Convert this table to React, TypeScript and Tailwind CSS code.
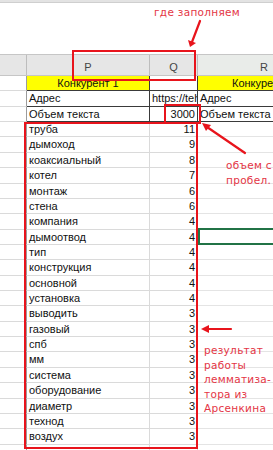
import React from 'react';

const words: [string, number][] = [
  ['труба', 11],
  ['дымоход', 9],
  ['коаксиальный', 8],
  ['котел', 7],
  ['монтаж', 6],
  ['стена', 6],
  ['компания', 4],
  ['дымоотвод', 4],
  ['тип', 4],
  ['конструкция', 4],
  ['основной', 4],
  ['установка', 4],
  ['выводить', 3],
  ['газовый', 3],
  ['спб', 3],
  ['мм', 3],
  ['система', 3],
  ['оборудование', 3],
  ['диаметр', 3],
  ['технод', 3],
  ['воздух', 3],
];

const ROW = 'flex h-[15.36px] shrink-0';
const RH = 'w-[27px] shrink-0 border-b border-r border-b-[#dadada] border-r-[#9c9c9c] bg-white';

function Row({ p, q, r, dark, yellow, qAlign = 'left' }: {
  p?: React.ReactNode;
  q?: React.ReactNode;
  r?: React.ReactNode;
  dark?: boolean;
  yellow?: boolean;
  qAlign?: 'left' | 'right';
}) {
  const b = dark ? 'border-[#3a3a3a]' : 'border-[#dadada]';
  return (
    <div className={ROW}>
      <div className={RH} />
      <div
        className={`w-[123px] shrink-0 border-b border-r ${b} px-[2px] leading-[14px] overflow-hidden whitespace-nowrap ${
          yellow ? 'bg-[#ffff00] text-center' : 'bg-white'
        }`}
      >
        {p}
      </div>
      <div
        className={`w-[48px] shrink-0 border-b border-r ${b} px-[2px] leading-[14px] overflow-hidden whitespace-nowrap bg-white ${
          qAlign === 'right' ? 'text-right' : ''
        }`}
      >
        {q}
      </div>
      <div
        className={`flex-1 border-b ${dark ? 'border-[#3a3a3a]' : 'border-[#e4e4e4]'} px-[2px] leading-[14px] overflow-hidden whitespace-nowrap ${
          yellow ? 'bg-[#ffff00] pl-[34px]' : 'bg-white'
        }`}
      >
        {r}
      </div>
    </div>
  );
}

export default function App() {
  return (
    <div
      className="relative w-[273px] h-[450px] overflow-hidden bg-white text-[11px] text-[#111]"
      style={{ fontFamily: '"Liberation Sans", Arial, sans-serif' }}
    >
      {/* top strip */}
      <div className="h-[3px] bg-[#e3e3e3] border-b border-[#cfcfcf]" />
      <div className="h-[51px]" />

      {/* column headers */}
      <div className="flex h-[22px] bg-[#e6e6e6] border-t border-b border-[#c6c6c6] text-[#444]">
        <div className="w-[27px] shrink-0 border-r border-[#bdbdbd]" />
        <div className="w-[123px] shrink-0 border-r border-[#bdbdbd] flex items-center justify-center pt-[4px]">P</div>
        <div className="w-[48px] shrink-0 border-r border-[#bdbdbd] flex items-center justify-center pt-[4px]">Q</div>
        <div className="flex-1 flex items-center pl-[62px] pt-[4px] bg-[#e9ece9]">R</div>
      </div>

      {/* sheet rows */}
      <Row dark yellow p="Конкурент 1" r="Конкурент 2" />
      <Row dark p="Адрес" q="https://tehnodom.ru" r="Адрес" />
      <Row dark p="Объем текста" q="3000" qAlign="right" r="Объем текста" />
      {words.map(([w, n]) => (
        <Row key={w} p={w} q={n} qAlign="right" />
      ))}
      <Row />

      {/* selected cell */}
      <div className="absolute left-[198px] top-[228px] w-[90px] h-[17px] border-2 border-[#217346]" />

      {/* annotation overlay */}
      <div className="absolute left-[72px] top-[50px] w-[124px] h-[31px] border-2 border-[#e8141c]" />
      <div className="absolute left-[164px] top-[104px] w-[37px] h-[20px] border-2 border-[#e8141c]" />
      <div className="absolute left-[24px] top-[122px] w-[174px] h-[327px] border-2 border-[#e8141c]" />

      <svg className="absolute left-0 top-0" width="273" height="450">
        <g stroke="#e8141c" strokeWidth="2.2" fill="none" strokeLinecap="round">
          <line x1="200" y1="21" x2="192" y2="42" />
          <line x1="245" y1="153" x2="207" y2="127" />
          <line x1="231" y1="329" x2="208" y2="329" />
        </g>
        <g fill="#e8141c">
          <polygon points="190,47 188,40 196,43" />
          <polygon points="202,123 211,125 206,131" />
          <polygon points="201,329 209,325 209,333" />
        </g>
      </svg>

      <div
        className="absolute left-0 top-0 w-[273px] h-[450px] text-[#e43545] text-[10.5px] leading-[14.5px] tracking-[0.3px]"
        style={{ fontFamily: '"DejaVu Sans", Verdana, sans-serif' }}
      >
        <div className="absolute left-[154px] top-[5px] whitespace-nowrap">где заполняем</div>
        <div className="absolute left-[226px] top-[158px] whitespace-nowrap">
          объем с<br />пробел.
        </div>
        <div className="absolute left-[204px] top-[343px] whitespace-nowrap">
          результат
          <br />
          работы
          <br />
          лемматиза-
          <br />
          тора из
          <br />
          Арсенкина
        </div>
      </div>
    </div>
  );
}
